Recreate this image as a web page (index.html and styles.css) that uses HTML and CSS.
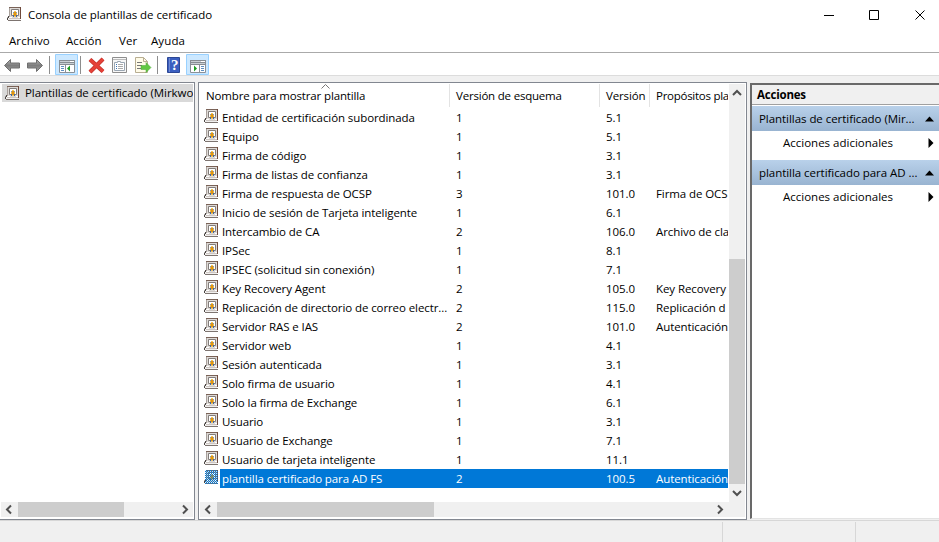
FILE: index.html
```html
<!DOCTYPE html>
<html lang="es">
<head>
<meta charset="utf-8">
<title>Consola de plantillas de certificado</title>
<link rel="stylesheet" href="styles.css">
</head>
<body>
<svg class="defs" width="0" height="0">
<defs>
<pattern id="dots" width="2" height="2" patternUnits="userSpaceOnUse"><path d="M0 0h1v1H0zM1 1h1v1H1z" fill="#0078d7"/></pattern>
<symbol id="cert" viewBox="0 0 14 14">
<path d="M2 0h11v11H2z" fill="#dedad7"/><path d="M2 .5h11" stroke="#7a6358"/><path d="M13.500 0v12" stroke="#6f4a3c"/><path d="M2.500 1v9" stroke="#a9a19c"/>
<path d="M4.500 2.500h7v6h-7z" fill="#fff" stroke="#827d7a"/>
<path d="M6 5h1v2H6zM9 5h1v2H9z" fill="#7f98c4"/><path d="M7 4h2v1H7z" fill="#f3c65a"/><path d="M6 6h4v2H6z" fill="#f0b93f"/><path d="M7 5h2v4H7z" fill="#dd9417"/><path d="M6.500 8v2M9.500 8v2" stroke="#3f66a8"/><path d="M7 9.500h2" stroke="#f0c96c"/>
<path d="M1 11h12v2H1z" fill="#f1efed"/><path d="M2 10.500h3M11 10.500h2" stroke="#fff"/><path d="M2 11.500h11" stroke="#cdc6c2"/><path d="M1 13.500h13" stroke="#7d7470"/><path d="M.5 13v-2.500M1.500 11V9" stroke="#4a4542"/>
</symbol>
</defs>
</svg>
<div class="window">
<header class="titlebar">
<svg class="cert"><use href="#cert"/></svg><span class="title">Consola de plantillas de certificado</span>
<svg class="controls" width="110" height="16"><path d="M4 8.500h10" stroke="#000"/><path d="M49.500 3.500h9v9h-9z" fill="none" stroke="#000"/><path d="M95.500 3.500l9 9m0-9l-9 9" stroke="#000"/></svg>
</header>
<nav class="menu"><span class="m1">Archivo</span><span class="m2">Acción</span><span class="m3">Ver</span><span class="m4">Ayuda</span></nav>
<div class="toolbar">
<svg width="210" height="22">
<defs><linearGradient id="gray" x2="0" y2="1"><stop stop-color="#b5b5b5"/><stop offset=".5" stop-color="#7d7d7d"/><stop offset="1" stop-color="#a5a5a5"/></linearGradient></defs>
<path d="M4.500 12.500l6-6v3.500h9v5h-9v3.500z" fill="url(#gray)" stroke="#6f6f6f"/><path d="M42.500 12.500l-6-6v3.500h-9v5h9v3.500z" fill="url(#gray)" stroke="#6f6f6f"/>
<path d="M49.500 3v18M80.500 3v18M157.500 3v18" stroke="#8d8d8d"/>
<g fill="#cce8ff" stroke="#99d1ff"><path d="M55.500 1.500h22v20h-22zM186.500 1.500h22v20h-22z"/></g>
<path d="M59.500 7.500h15v12h-15z" fill="#fff" stroke="#8a9097"/><path d="M59 7.500h16M59 9.500h16M59 11.500h16" stroke="#878d93"/><path d="M60 8.500h10M60 10.500h14" stroke="#c9cfd4"/><path d="M65.500 12v7" stroke="#8a9097"/><path d="M61 13.500h3M61 15.500h3M61 17.500h3" stroke="#5f8fc0"/><path d="M70 12.500v6l-3-3z" fill="#1b9d22"/>
<path d="M90 6.500l13 12M103 6L90 19" stroke="#c2332c" stroke-width="4.200"/><path d="M90 6.500l13 12M103 6L90 19" stroke="#e54138" stroke-width="2.800"/>
<path d="M112.500 4.500h14v15h-14z" fill="#f7f7f7" stroke="#8e8e8e"/><path d="M113 6.500h13" stroke="#bbb"/><path d="M114.500 9.500h3v-1h3v1h4v8h-10z" fill="#fff" stroke="#9aa6b2"/><path d="M116 11.500h1M116 13.500h1M116 15.500h1" stroke="#3974b8"/><path d="M118 11.500h5M118 13.500h5M118 15.500h5" stroke="#aaa"/>
<path d="M135.500 4.500h8l4 4v11h-12z" fill="#fffbe8" stroke="#b8ae92"/><path d="M143.500 4.500v4h4" fill="none" stroke="#b8ae92"/><path d="M137 9.500h5M137 12.500h5M137 15.500h5" stroke="#777"/><path d="M141 12.500h5v-3l5 5-5 5v-3h-5z" fill="#62c843" stroke="#4aa638" stroke-width=".5"/>
<path d="M167.500 4.500h12v15h-12z" fill="#3b5fc0" stroke="#2c4795"/><path d="M169.500 5v14" stroke="#7089d0"/><text x="171" y="17" fill="#fff" font-family="Liberation Serif" font-size="15" font-weight="bold">?</text>
<path d="M190.500 7.500h15v12h-15z" fill="#fff" stroke="#8a9097"/><path d="M190 7.500h16M190 9.500h16M190 11.500h16" stroke="#878d93"/><path d="M191 8.500h10M191 10.500h14" stroke="#c9cfd4"/><path d="M199.500 12v7" stroke="#8a9097"/><path d="M201 13.500h3M201 15.500h3M201 17.500h3" stroke="#5f8fc0"/><path d="M194 12.500v6l3-3z" fill="#1b9d22"/>
</svg>
</div>
<main class="workspace">
<aside class="tree">
<div class="root"><svg class="cert"><use href="#cert"/></svg><span>Plantillas de certificado (Mirkwo</span></div>
<div class="hscroll"><svg width="16" height="15"><path d="M10 3.500L6 7.500l4 4" class="chev"/></svg><i></i><svg class="end" width="16" height="15"><path d="M6 3.500l4 4-4 4" class="chev"/></svg></div>
</aside>
<section class="list">
<div class="listbody">
<div class="grid head"><b>Nombre para mostrar plantilla</b><b>Versión de esquema</b><b>Versión</b><b>Propósitos pla</b><svg class="sort" width="9" height="5"><path d="M.5 4.500l4-4 4 4" fill="none" stroke="#777"/></svg></div>
<div id="rows"></div>
</div>
<div class="vscroll"><svg width="16" height="17"><path d="M4 11l4-4 4 4" class="chev"/></svg><i></i><svg class="end" width="16" height="17"><path d="M4 6l4 4 4-4" class="chev"/></svg></div>
<div class="hscroll"><svg width="16" height="15"><path d="M10 3.500L6 7.500l4 4" class="chev"/></svg><i></i><svg class="end" width="16" height="15"><path d="M6 3.500l4 4-4 4" class="chev"/></svg></div>
</section>
<aside class="actions">
<h2>Acciones</h2>
<div class="group"><span>Plantillas de certificado (Mir...</span><svg width="9" height="6"><path d="M0 5.500L4.500 .5l4.500 5z"/></svg></div>
<div class="action"><span>Acciones adicionales</span><svg width="6" height="10"><path d="M.5 0l5 5-5 5z"/></svg></div>
<div class="group second"><span>plantilla certificado para AD ...</span><svg width="9" height="6"><path d="M0 5.500L4.500 .5l4.500 5z"/></svg></div>
<div class="action"><span>Acciones adicionales</span><svg width="6" height="10"><path d="M.5 0l5 5-5 5z"/></svg></div>
</aside>
</main>
<footer class="status"><i></i><i></i></footer>
</div>
<script src="rows.js"></script>
</body>
</html>
```
FILE: styles.css
```css
* { box-sizing: border-box; }
body { margin: 0; font: 11.5px/19px "Open Sans", "Noto Sans", sans-serif; letter-spacing: -.06px; color: #000; overflow: hidden; }
svg { display: block; flex: none; }
.defs { position: absolute; }
.window { width: 939px; height: 542px; background: #f0f0f0; display: flex; flex-direction: column; }
.cert { width: 14px; height: 14px; }
.titlebar { height: 31px; background: #fff; display: flex; align-items: center; padding: 0 9px 2px 7px; }
.titlebar .cert { margin-top: -2px; }
.title { margin-left: 7px; }
.controls { margin-left: auto; }
.menu { height: 22px; background: #fff; display: flex; align-items: center; padding: 0 0 2px 9px; border-bottom: 1px solid #aaa; letter-spacing: .1px; }
.menu .m1 { width: 57px; }
.menu .m2 { width: 53px; }
.menu .m3 { width: 32px; }
.toolbar { height: 23px; background: #fff; border-bottom: 1px solid #dcdcdc; }
.workspace { height: 444px; display: flex; padding-top: 6px; }
.tree { width: 195px; height: 438px; border: solid #828790; border-width: 1px 1px 1px 0; background: #fff; display: flex; flex-direction: column; justify-content: space-between; padding: 1px 1px 2px 1px; }
.root { display: flex; align-items: center; height: 18px; margin-left: 1px; padding: 0 0 1px 4px; background: #d9d9d9; white-space: nowrap; overflow: hidden; letter-spacing: -.05px; }
.root .cert { margin-left: -1px; }
.root span { margin-left: 6px; }
.hscroll { height: 15px; background: #f0f0f0; display: flex; }
.hscroll i { width: 106px; margin-left: 1px; background: #cdcdcd; }
.end { margin-left: auto; }
.chev { fill: none; stroke: #505050; stroke-width: 2; }
.list { width: 549px; height: 438px; margin-left: 3px; border: 1px solid #828790; background: #fff; display: grid; grid-template-columns: 529px 16px; grid-template-rows: 418px 15px; padding: 1px 1px 0; }
.listbody { overflow: hidden; margin: -1px 1px 0 0; letter-spacing: -.09px; }
.grid { display: grid; grid-template-columns: 249px 150px 50px 120px; white-space: nowrap; }
.head { height: 25px; line-height: 23px; position: relative; padding-top: 1px; grid-template-columns: 250px 150px 50px 120px; letter-spacing: -.14px; }
.head b { font-weight: normal; padding-left: 6px; border-right: 1px solid #e3e3e3; height: 23px; }
.head b:nth-child(2) { letter-spacing: -.2px; }
.head b:nth-child(4) { letter-spacing: -.27px; }
.sort { position: absolute; left: 121px; top: 1px; }
.row { height: 19px; }
.row > span { padding-left: 7px; }
.row .name { display: flex; padding-left: 4px; }
.row .cert { margin-top: 1px; }
.label { flex: 1; padding-left: 2px; margin-left: 2px; }
.selected > span:not(.name), .selected .label { background: #0078d7; color: #fff; }
.vscroll { background: #f0f0f0; display: flex; flex-direction: column; }
.vscroll i { height: 225px; margin-top: 158px; background: #cdcdcd; }
.vscroll .end { margin: auto 0 0; }
.list .hscroll { grid-column: 1 / -1; }
.list .hscroll i { width: 217px; }
.list .hscroll .end { margin-right: 17px; }
.actions { width: 189px; height: 436px; margin: 1px 0 0 3px; background: #fff; border: solid #696969; border-width: 2px 0 0 2px; border-bottom: 1px solid #e3e3e3; letter-spacing: 0; }
.actions h2 { margin: 0 0 1px; height: 20px; padding-left: 5px; font-size: 11.5px; line-height: 19px; letter-spacing: -.2px; background: #f0f0f0; border-bottom: 1px solid #a0a0a0; }
.group, .action { height: 25px; display: flex; align-items: center; justify-content: space-between; white-space: nowrap; padding: 0 5px 0 7px; }
.group { background: linear-gradient(#b9d1ea, #99b4d1); letter-spacing: -.05px; }
.second { margin-top: 4px; }
.action { padding: 0 5px 2px 31px; }
.status { height: 22px; border-top: 1px solid #d7d7d7; display: flex; padding-top: 1px; }
.status i { flex: none; border-right: 1px solid #d7d7d7; width: 723px; }
.status i + i { width: 133px; }
```
FILE: rows.js
```js
const rows = [
  ["Entidad de certificación subordinada", "1", "5.1", ""],
  ["Equipo", "1", "5.1", ""],
  ["Firma de código", "1", "3.1", ""],
  ["Firma de listas de confianza", "1", "3.1", ""],
  ["Firma de respuesta de OCSP", "3", "101.0", "Firma de OCS"],
  ["Inicio de sesión de Tarjeta inteligente", "1", "6.1", ""],
  ["Intercambio de CA", "2", "106.0", "Archivo de cla"],
  ["IPSec", "1", "8.1", ""],
  ["IPSEC (solicitud sin conexión)", "1", "7.1", ""],
  ["Key Recovery Agent", "2", "105.0", "Key Recovery"],
  ["Replicación de directorio de correo electr...", "2", "115.0", "Replicación d"],
  ["Servidor RAS e IAS", "2", "101.0", "Autenticación"],
  ["Servidor web", "1", "4.1", ""],
  ["Sesión autenticada", "1", "3.1", ""],
  ["Solo firma de usuario", "1", "4.1", ""],
  ["Solo la firma de Exchange", "1", "6.1", ""],
  ["Usuario", "1", "3.1", ""],
  ["Usuario de Exchange", "1", "7.1", ""],
  ["Usuario de tarjeta inteligente", "1", "11.1", ""],
  ["plantilla certificado para AD FS", "2", "100.5", "Autenticación"]
];
document.getElementById("rows").innerHTML = rows.map((r, i) => {
  const sel = i === rows.length - 1;
  const icon = `<svg class="cert"><use href="#cert"/>${sel ? '<rect x="1" width="13" height="14" fill="url(#dots)"/>' : ""}</svg>`;
  return `<div class="grid row${sel ? " selected" : ""}"><span class="name">${icon}<span class="label">${r[0]}</span></span><span>${r[1]}</span><span>${r[2]}</span><span>${r[3]}</span></div>`;
}).join("");
```
